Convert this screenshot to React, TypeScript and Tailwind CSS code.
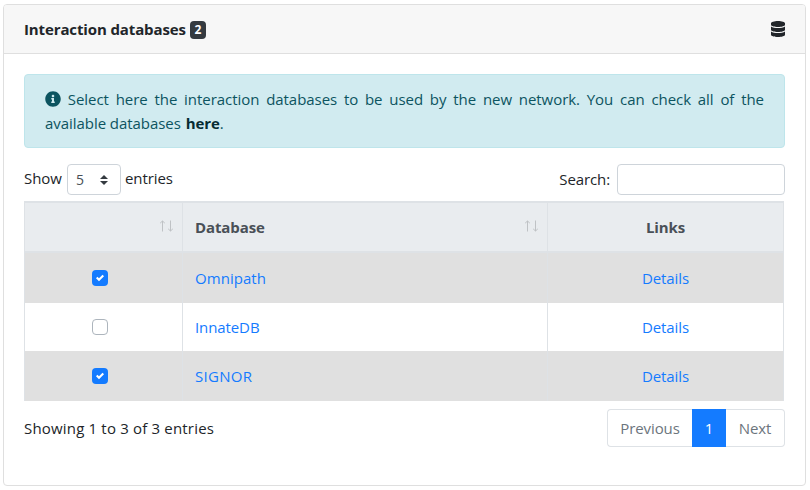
import { ReactNode } from "react";

const rows = [
  { name: "Omnipath", checked: true, height: "h-[50px]", bg: "bg-[#e0e0e0]", tracking: "tracking-[0.05px]" },
  { name: "InnateDB", checked: false, height: "h-12", bg: "bg-white", tracking: "tracking-[-0.1px]" },
  { name: "SIGNOR", checked: true, height: "h-[50px]", bg: "bg-[#e0e0e0]", tracking: "tracking-[0.3px]" },
];

function InfoIcon() {
  return (
    <svg className="inline-block size-4 align-[-2px]" viewBox="0 0 512 512" fill="currentColor">
      <path d="M256 8C119.043 8 8 119.083 8 256c0 136.997 111.043 248 248 248s248-111.003 248-248C504 119.083 392.957 8 256 8zm0 110c23.196 0 42 18.804 42 42s-18.804 42-42 42-42-18.804-42-42 18.804-42 42-42zm56 254c0 6.627-5.373 12-12 12h-88c-6.627 0-12-5.373-12-12v-24c0-6.627 5.373-12 12-12h12v-64h-12c-6.627 0-12-5.373-12-12v-24c0-6.627 5.373-12 12-12h64c6.627 0 12 5.373 12 12v100h12c6.627 0 12 5.373 12 12v24z" />
    </svg>
  );
}

function DatabaseIcon() {
  return (
    <svg className="h-4 w-3.5" viewBox="0 0 448 512" fill="currentColor">
      <path d="M448 73.143v45.714C448 159.143 347.667 192 224 192S0 159.143 0 118.857V73.143C0 32.857 100.333 0 224 0s224 32.857 224 73.143zM448 176v102.857C448 319.143 347.667 352 224 352S0 319.143 0 278.857V176c48.125 33.143 136.208 48.572 224 48.572S399.874 209.143 448 176zm0 160v102.857C448 479.143 347.667 512 224 512S0 479.143 0 438.857V336c48.125 33.143 136.208 48.572 224 48.572S399.874 369.143 448 336z" />
    </svg>
  );
}

function SortIcon() {
  return (
    <svg className="mb-[3px] h-3 w-[15px]" viewBox="0 0 15 12" fill="none" stroke="#bfc2c5">
      <path d="M3.5 11.5V1M1.2 3.1 3.5 1 5.8 3.1M11.5 0.5v10.5M9.2 8.9l2.3 2.1 2.3-2.1" />
    </svg>
  );
}

function Checkbox({ checked }: { checked: boolean }) {
  return checked ? (
    <span className="flex size-4 items-center justify-center rounded bg-[#147bff]">
      <svg className="size-2" viewBox="0 0 8 8" fill="#fff">
        <path d="M6.564.75l-3.59 3.612-1.538-1.55L0 4.26l2.974 2.99L8 2.193z" />
      </svg>
    </span>
  ) : (
    <span className="size-4 rounded border border-[#adb5bd] bg-white" />
  );
}

function Cell({ children, className = "" }: { children?: ReactNode; className?: string }) {
  return <div className={"flex items-center border-[#dee2e6] " + className}>{children}</div>;
}

export default function App() {
  return (
    <div className="h-[490px] w-[810px] bg-white pt-1 pl-[3px] font-['Open_Sans','Noto_Sans',sans-serif] text-[15px] leading-6 tracking-[-0.1px] text-[#212529]">
      <section className="flex h-[482px] w-[803px] flex-col rounded border border-[#dfdfdf]">
        <header className="flex h-[49px] shrink-0 items-center rounded-t-[3px] border-b border-[#dfdfdf] bg-[#f7f7f7] px-5">
          <h5 className="w-[162px] font-bold tracking-[-0.12px] whitespace-nowrap">Interaction databases</h5>
          <span className="mt-px ml-1 flex h-[18px] w-4 items-center justify-center rounded bg-[#343a40] text-xs font-bold text-white">2</span>
          <span className="ml-auto"><DatabaseIcon /></span>
        </header>

        <div className="px-5 pt-5">
          <div className="h-[74px] w-[761px] rounded border border-[#bee5eb] bg-[#d1ebf0] px-5 py-3 text-justify tracking-[-0.05px] text-[#0c5460]">
            <InfoIcon /> Select here the interaction databases to be used by the new network. You can check all of the available databases{" "}
            <b className="ml-px inline-block tracking-[-0.1px] text-[#062c33]">here</b>.
          </div>

          <div className="mt-4 flex h-[31px] w-[761px] items-center">
            <span className="w-[39px] pb-[3px]">Show</span>
            <div className="ml-1 flex h-[31px] w-[54px] items-center justify-between rounded border border-[#ced4da] pr-3 pl-2 text-[14px] text-[#495057]">
              5
              <svg className="h-[10px] w-2" viewBox="0 0 4 5" fill="#343a40"><path d="M2 0L0 2h4zm0 5L0 3h4z" /></svg>
            </div>
            <span className="ml-1 pb-[3px]">entries</span>
            <span className="ml-auto pb-px">Search:</span>
            <input className="ml-[7px] h-[31px] w-[168px] rounded border border-[#ced4da] px-2 outline-none" />
          </div>

          <div className="mt-1.5 w-[760px]">
            <div className="grid h-[52px] grid-cols-[158px_365px_237px] border-y-2 border-[#dee2e6] bg-[#e9ecef] font-bold text-[#495057]">
              <Cell className="justify-end border-l pr-2"><SortIcon /></Cell>
              <Cell className="justify-between border-l pr-2 pl-3">Database<SortIcon /></Cell>
              <Cell className="justify-center border-x">Links</Cell>
            </div>
            {rows.map((row) => (
              <div key={row.name} className={"grid grid-cols-[158px_365px_237px] text-[#147bff] " + row.height + " " + row.bg}>
                <Cell className="justify-center border-l pr-[7px]"><Checkbox checked={row.checked} /></Cell>
                <Cell className={"border-l pl-3 " + row.tracking}>{row.name}</Cell>
                <Cell className="justify-center border-x">Details</Cell>
              </div>
            ))}
          </div>

          <div className="mt-2 flex h-[38px] w-[761px] items-center justify-between">
            <span className="tracking-[0.18px]">Showing 1 to 3 of 3 entries</span>
            <nav className="flex h-[38px] text-[#6c757d]">
              <span className="flex w-[85px] items-center justify-center rounded-l border border-r-0 border-[#dee2e6]">Previous</span>
              <span className="flex w-[34px] items-center justify-center bg-[#147bff] text-white">1</span>
              <span className="flex w-[59px] items-center justify-center rounded-r border border-l-0 border-[#dee2e6]">Next</span>
            </nav>
          </div>
        </div>
      </section>
    </div>
  );
}
